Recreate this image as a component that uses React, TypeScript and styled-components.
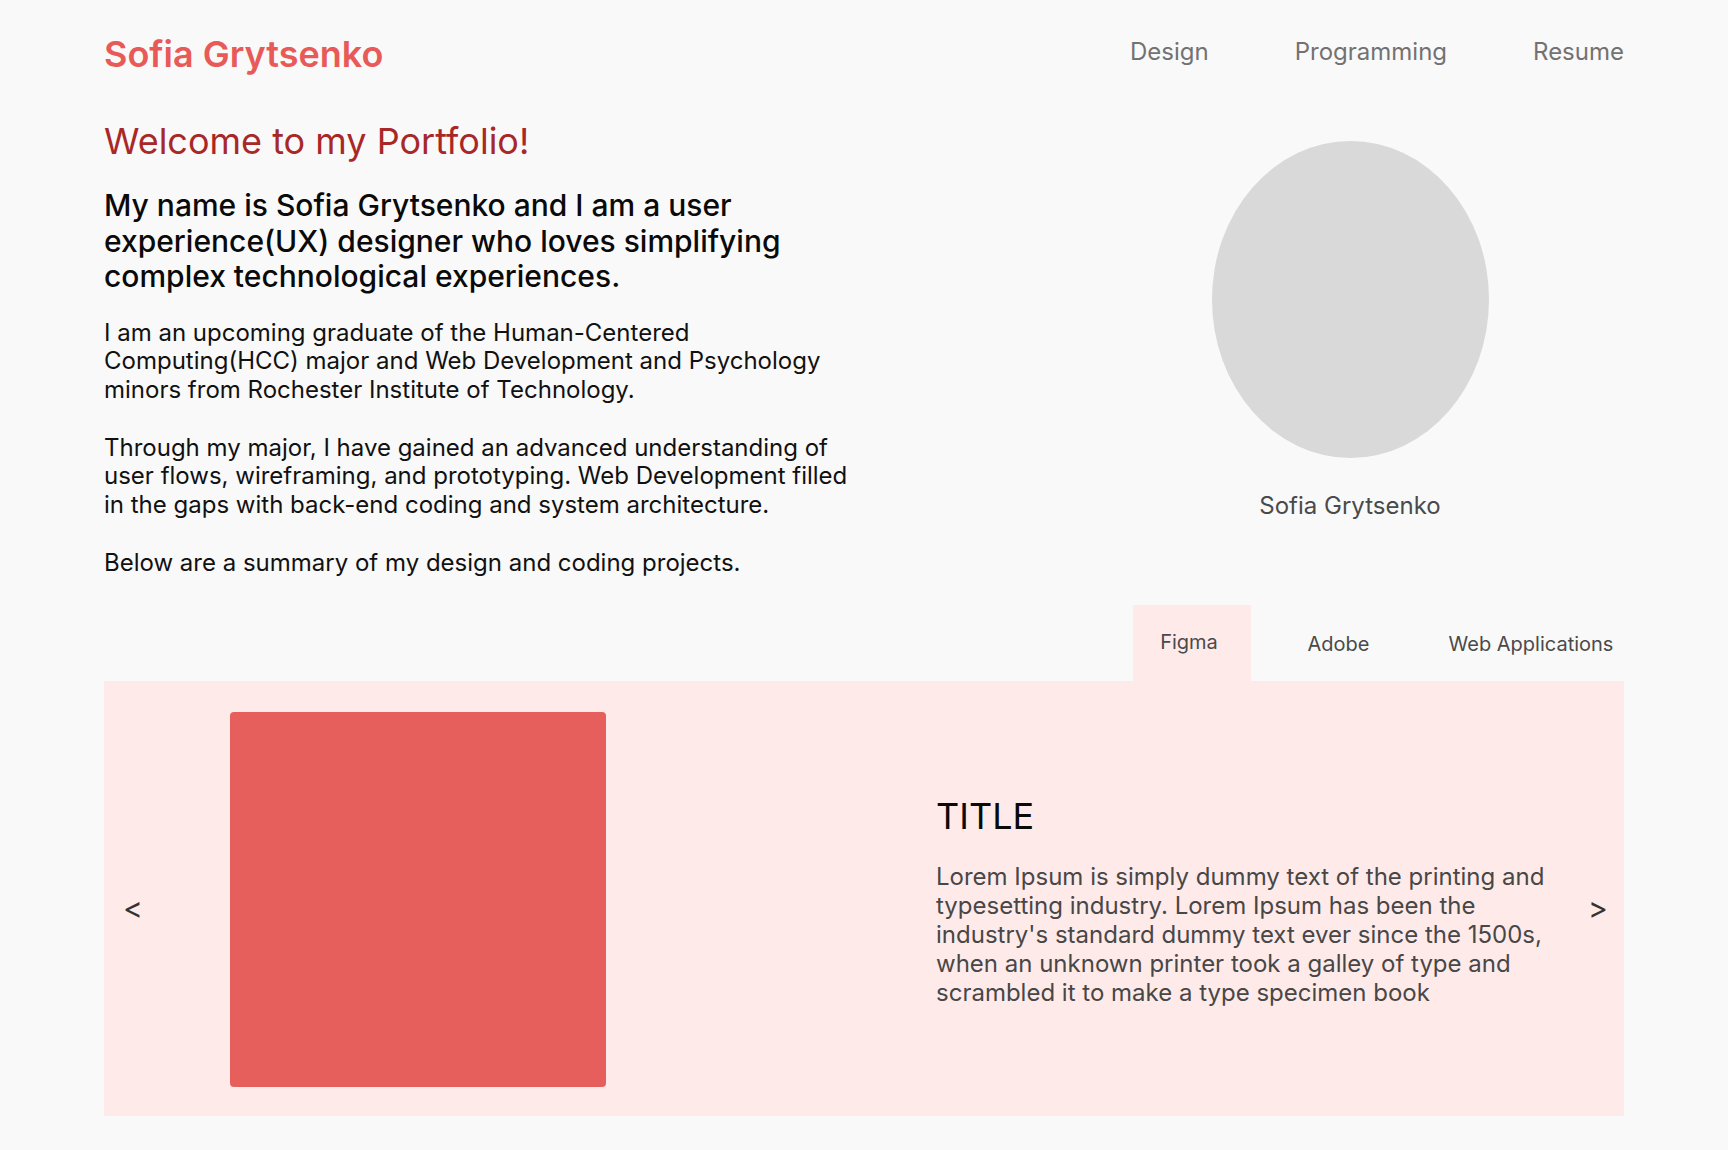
import React from "react";
import styled, { createGlobalStyle } from "styled-components";

const GlobalStyle = createGlobalStyle`
  * { box-sizing: border-box; }
  html, body { margin: 0; padding: 0; background: #f9f9f9; }
  body { font-family: Inter, "Noto Sans", Arial, sans-serif; color: #111; }
  button { font-family: inherit; }
`;

const Page = styled.div`
  width: 1520px;
  margin: 0 auto;
  padding: 32px 0 34px;
`;

const Header = styled.header`
  display: flex;
  align-items: center;
  justify-content: space-between;
  height: 44px;
`;

const Logo = styled.a`
  font-size: 36px;
  font-weight: 600;
  color: #e85a57;
  text-decoration: none;
  line-height: 44px;
`;

const Nav = styled.nav`
  display: flex;
  gap: 86px;
  margin-top: -6px;
`;

const NavLink = styled.a`
  font-size: 24px;
  color: #727272;
  text-decoration: none;
`;

const Hero = styled.section`
  display: flex;
  justify-content: space-between;
  margin-top: 43px;
`;

const Intro = styled.div`
  width: 756px;
`;

const Welcome = styled.h1`
  margin: 0;
  font-size: 36px;
  font-weight: 400;
  line-height: 44px;
  color: #a82828;
`;

const Lead = styled.h2`
  margin: 25px 0 0;
  font-size: 30px;
  font-weight: 500;
  line-height: 35.5px;
  color: #0a0a0a;
`;

const Body = styled.p`
  margin: 24px 0 0;
  font-size: 24px;
  line-height: 28.8px;
  color: #111;
`;

const Profile = styled.figure`
  width: 548px;
  margin: 0;
  padding-top: 22px;
  display: flex;
  flex-direction: column;
  align-items: center;
`;

const Avatar = styled.div`
  width: 277px;
  height: 317px;
  border-radius: 50%;
  background: #d9d9d9;
`;

const Caption = styled.figcaption`
  margin-top: 34px;
  font-size: 24px;
  line-height: 28.8px;
  color: #4a4a4a;
`;

const Tabs = styled.div`
  display: flex;
  justify-content: flex-end;
  margin-top: 27px;
`;

const Tab = styled.button<{ $active?: boolean; $w: number; $shift?: number }>`
  width: ${(p) => p.$w}px;
  height: 76px;
  padding: ${(p) => (p.$active ? "0 6px 2px 0" : "3px 0 0")};
  padding-left: ${(p) => p.$shift ?? 0}px;
  border: none;
  font-size: 20px;
  color: #4a4a4a;
  text-align: center;
  background: ${(p) => (p.$active ? "#ffeaea" : "transparent")};
  cursor: pointer;
`;

const Panel = styled.section`
  display: flex;
  align-items: center;
  background: #ffeaea;
  padding: 31px 19px 29px 19px;
`;

const Arrow = styled.button`
  border: none;
  background: transparent;
  padding: 0;
  width: 17px;
  font-size: 30px;
  line-height: 1;
  color: #333;
  margin-top: 18px;
  cursor: pointer;
`;

const Slide = styled.div`
  flex: 1;
  display: flex;
  align-items: center;
  justify-content: space-between;
  padding: 0 32px 0 90px;
`;

const Thumb = styled.div`
  width: 376px;
  height: 375px;
  border-radius: 4px;
  background: #e65f5c;
`;

const SlideText = styled.div`
  width: 620px;
  margin-top: 2px;
`;

const SlideTitle = styled.h3`
  margin: 0;
  font-size: 36px;
  font-weight: 400;
  line-height: 44px;
  color: #0a0a0a;
`;

const SlideBody = styled.p`
  margin: 24px 0 0;
  font-size: 24px;
  line-height: 29px;
  color: #474747;
`;

export default function App() {
  return (
    <>
      <GlobalStyle />
      <Page>
        <Header>
          <Logo href="#">Sofia Grytsenko</Logo>
          <Nav>
            <NavLink href="#">Design</NavLink>
            <NavLink href="#">Programming</NavLink>
            <NavLink href="#">Resume</NavLink>
          </Nav>
        </Header>

        <Hero>
          <Intro>
            <Welcome>Welcome to my Portfolio!</Welcome>
            <Lead>
              My name is Sofia Grytsenko and I am a user experience(UX) designer who loves
              simplifying complex technological experiences.
            </Lead>
            <Body>
              I am an upcoming graduate of the Human-Centered Computing(HCC) major and Web
              Development and Psychology minors from Rochester Institute of Technology.
              <br />
              <br />
              Through my major, I have gained an advanced understanding of user flows,
              wireframing, and prototyping. Web Development filled in the gaps with back-end
              coding and system architecture.
              <br />
              <br />
              Below are a summary of my design and coding projects.
            </Body>
          </Intro>
          <Profile>
            <Avatar />
            <Caption>Sofia Grytsenko</Caption>
          </Profile>
        </Hero>

        <Tabs>
          <Tab $active $w={118}>
            Figma
          </Tab>
          <Tab $w={175}>Adobe</Tab>
          <Tab $w={198} $shift={12}>
            Web Applications
          </Tab>
        </Tabs>
        <Panel>
          <Arrow aria-label="Previous">&lt;</Arrow>
          <Slide>
            <Thumb />
            <SlideText>
              <SlideTitle>TITLE</SlideTitle>
              <SlideBody>
                Lorem Ipsum is simply dummy text of the printing and typesetting industry.
                Lorem Ipsum has been the industry's standard dummy text ever since the 1500s,
                when an unknown printer took a galley of type and scrambled it to make a type
                specimen book
              </SlideBody>
            </SlideText>
          </Slide>
          <Arrow aria-label="Next">&gt;</Arrow>
        </Panel>
      </Page>
    </>
  );
}
